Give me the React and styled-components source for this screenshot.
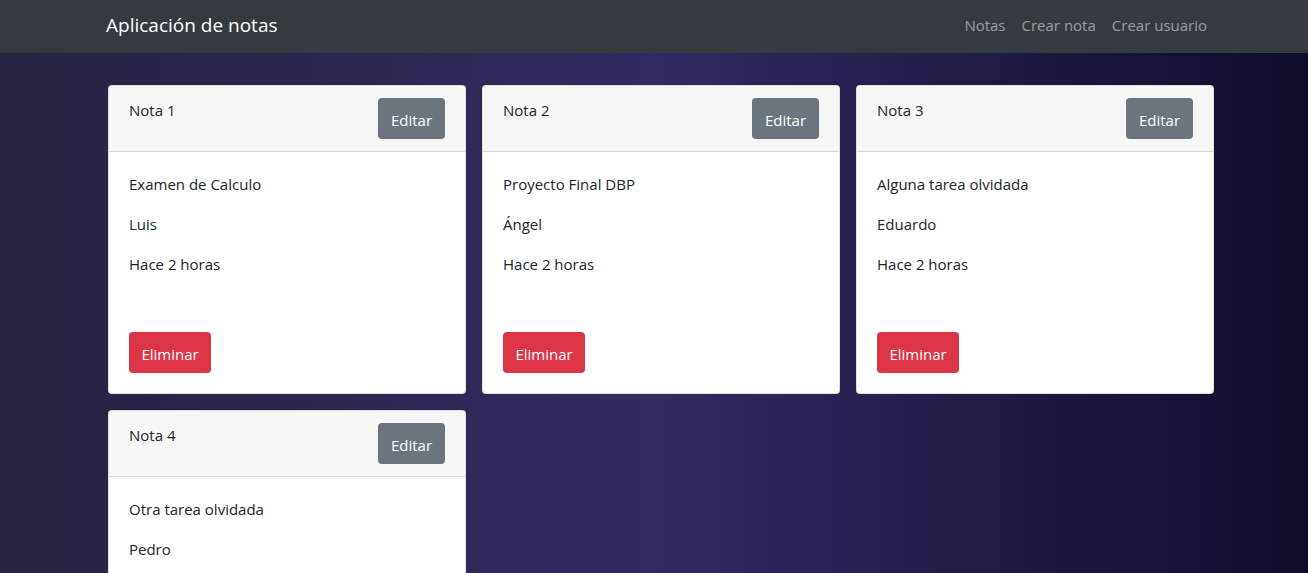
import React from 'react';
import styled, { createGlobalStyle } from 'styled-components';

const GlobalStyle = createGlobalStyle`
    html, body {
        margin: 0;
        padding: 0;
    }
    body {
        font-family: 'Open Sans', 'Noto Sans', 'Liberation Sans', sans-serif;
        font-size: 16px;
        line-height: 1.5;
        color: #212529;
        min-height: 100vh;
        background: linear-gradient(to left, #0f0c29, #302b63 50%, #24243e);
        background-attachment: fixed;
    }
`;

const Navbar = styled.nav`
    height: 53px;
    background: #343a40;
`;

const Container = styled.div`
    width: 1124px;
    margin: 0 auto;
    padding-left: 14px;
    box-sizing: border-box;
    height: 100%;
`;

const NavInner = styled(Container)`
    display: flex;
    align-items: center;
    justify-content: space-between;
    padding-bottom: 3px;
`;

const Brand = styled.a`
    color: #fff;
    font-size: 19px;
    text-decoration: none;
`;

const NavLinks = styled.div`
    display: flex;
    margin-right: 1px;
`;

const NavLink = styled.a`
    color: rgba(255, 255, 255, 0.5);
    font-size: 15px;
    padding: 0 8px;
    text-decoration: none;
`;

const Main = styled.main`
    padding-top: 32px;
`;

const Grid = styled.div`
    display: grid;
    grid-template-columns: repeat(3, 358px);
    column-gap: 16px;
    row-gap: 16px;
    margin-left: 2px;
`;

const Card = styled.div`
    background: #fff;
    border: 1px solid rgba(0, 0, 0, 0.125);
    border-radius: 4px;
    overflow: hidden;
`;

const CardHeader = styled.div`
    display: flex;
    justify-content: space-between;
    align-items: flex-start;
    padding: 12px 20px;
    background: #f7f7f7;
    border-bottom: 1px solid rgba(0, 0, 0, 0.125);
`;

const Title = styled.span`
    font-size: 15px;
    margin-top: 1px;
`;

const CardBody = styled.div`
    padding: 21px 20px 20px;
`;

const Line = styled.p`
    margin: 0 0 16px;
    font-size: 15px;
    height: 24px;
`;

const Spacer = styled.div`
    height: 39px;
`;

const Button = styled.button`
    display: inline-flex;
    align-items: center;
    justify-content: center;
    box-sizing: border-box;
    height: 41px;
    padding: 2px 12px 0;
    border: none;
    border-radius: 4px;
    font-family: inherit;
    font-size: 15px;
    color: #fff;
    background: ${(p) => (p.$variant === 'danger' ? '#dc3545' : '#6c757d')};
    min-width: ${(p) => (p.$variant === 'danger' ? '82px' : '67px')};
    cursor: pointer;
`;

const notes = [
    { id: 1, title: 'Examen de Calculo', author: 'Luis', date: 'Hace 2 horas' },
    { id: 2, title: 'Proyecto Final DBP', author: 'Ángel', date: 'Hace 2 horas' },
    { id: 3, title: 'Alguna tarea olvidada', author: 'Eduardo', date: 'Hace 2 horas' },
    { id: 4, title: 'Otra tarea olvidada', author: 'Pedro', date: 'Hace 2 horas' },
];

function NoteCard({ note }) {
    return (
        <Card>
            <CardHeader>
                <Title>Nota {note.id}</Title>
                <Button>Editar</Button>
            </CardHeader>
            <CardBody>
                <Line>{note.title}</Line>
                <Line>{note.author}</Line>
                <Line>{note.date}</Line>
                <Spacer />
                <Button $variant="danger">Eliminar</Button>
            </CardBody>
        </Card>
    );
}

export default function App() {
    return (
        <>
            <GlobalStyle />
            <Navbar>
                <NavInner>
                    <Brand href="#">Aplicación de notas</Brand>
                    <NavLinks>
                        <NavLink href="#">Notas</NavLink>
                        <NavLink href="#">Crear nota</NavLink>
                        <NavLink href="#">Crear usuario</NavLink>
                    </NavLinks>
                </NavInner>
            </Navbar>
            <Main>
                <Container>
                    <Grid>
                        {notes.map((n) => (
                            <NoteCard key={n.id} note={n} />
                        ))}
                    </Grid>
                </Container>
            </Main>
        </>
    );
}
